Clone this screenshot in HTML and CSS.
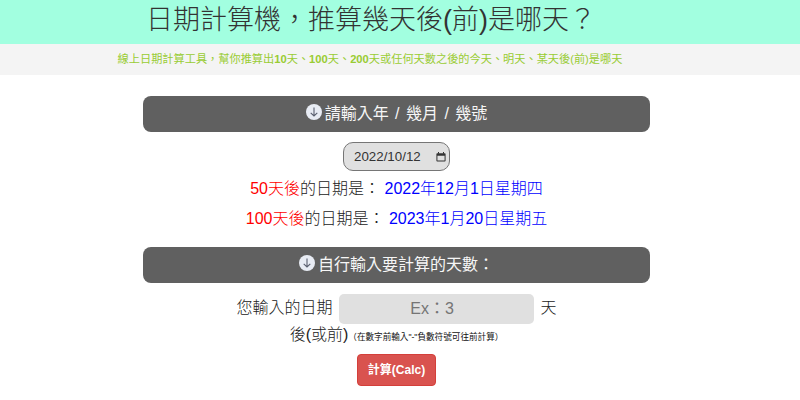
FILE: index.html
```html
<!DOCTYPE html>
<html lang="zh-Hant">
<head>
    <meta charset="UTF-8">
    <meta name="viewport" content="width=device-width, initial-scale=1.0">
    <title>日期計算機</title>
    <link rel="stylesheet" href="styles.css">
</head>
<body>

<header class="top-title">
    <h1>日期計算機，推算幾天後(前)是哪天？</h1>
</header>

<div class="sub-title">
    <h2>線上日期計算工具，幫你推算出<b>10</b>天、<b>100</b>天、<b>200</b>天或任何天數之後的今天、明天、某天後(前)是哪天</h2>
</div>

<div class="container">
    <div class="section-bar">
        <svg class="down-icon" viewBox="0 0 16 16"><circle cx="8" cy="8" r="8" fill="#e8ecf4"/><path d="M8 3.4v8.6M4.7 8.8 8 12l3.3-3.2" fill="none" stroke="#5a6070" stroke-width="1.1"/></svg>
        <span>請輸入年 / 幾月 / 幾號</span>
    </div>

    <div class="date-box">
        <input class="date-input" type="text" value="2022/10/12">
        <svg class="cal-icon" viewBox="0 0 12 12"><path d="M1.5 1.5h9a1 1 0 0 1 1 1v8a1 1 0 0 1-1 1h-9a1 1 0 0 1-1-1v-8a1 1 0 0 1 1-1zM1.7 4.6v5.7h8.6V4.6z" fill="#333" fill-rule="evenodd"/><path d="M3 0v2M9 0v2" stroke="#333" stroke-width="1.2"/></svg>
    </div>
    <p class="result"><span class="red">50天後</span>的日期是： <span class="blue">2022年12月1日星期四</span></p>
    <p class="result"><span class="red">100天後</span>的日期是： <span class="blue">2023年1月20日星期五</span></p>

    <div class="section-bar second">
        <svg class="down-icon" viewBox="0 0 16 16"><circle cx="8" cy="8" r="8" fill="#e8ecf4"/><path d="M8 3.4v8.6M4.7 8.8 8 12l3.3-3.2" fill="none" stroke="#5a6070" stroke-width="1.1"/></svg>
        <span>自行輸入要計算的天數：</span>
    </div>

    <p class="day-form">
        您輸入的日期
        <input class="day-input" type="text" placeholder="Ex：3">
        天後(或前)<small class="hint">（在數字前輸入"-"負數符號可往前計算）</small>
    </p>

    <button class="calc-btn">計算(Calc)</button>
</div>

</body>
</html>
```

FILE: styles.css
```css
body {
    margin: 0;
    padding: 0;
    background-color: #fff;
    color: #222;
    font-family: "Liberation Sans", "Noto Sans CJK TC", sans-serif;
    font-weight: 300;
    overflow: hidden;
}

.top-title {
    height: 44px;
    background-color: #a2ffe0;
    padding-left: 146px;
}

.top-title h1 {
    margin: 0;
    font-size: 27px;
    font-weight: 300;
    line-height: 40px;
    color: #333;
}

.sub-title {
    height: 31px;
    background-color: #f4f4f4;
    padding-right: 60px;
    text-align: center;
}

.sub-title h2 {
    margin: 0;
    font-size: 11.2px;
    font-weight: normal;
    line-height: 31px;
    color: #99cc33;
}

.container {
    width: 507px;
    margin-left: 143px;
    padding-top: 21px;
    text-align: center;
}

.section-bar {
    display: flex;
    align-items: center;
    justify-content: center;
    gap: 3px;
    box-sizing: border-box;
    height: 36px;
    padding-bottom: 4px;
    background-color: #606060;
    border-radius: 8px;
    color: #f6f6f6;
    font-size: 16px;
    font-weight: normal;
    word-spacing: 2px;
}

.section-bar.second {
    margin-top: 16px;
}

.down-icon {
    width: 16px;
    height: 16px;
}

.date-box {
    display: flex;
    align-items: center;
    box-sizing: border-box;
    width: 107px;
    height: 29px;
    margin: 10px auto 0;
    padding: 0 3px 0 10px;
    background-color: #e0e0e0;
    border: 1px solid #767676;
    border-radius: 10px;
}

.date-input {
    width: 82px;
    padding: 0;
    background: none;
    border: none;
    font-family: "Liberation Sans", sans-serif;
    font-size: 13.33px;
    color: #333;
}

.cal-icon {
    width: 12px;
    height: 12px;
}

.result {
    margin: 0;
    height: 30px;
    font-size: 16px;
    line-height: 36px;
}

.red {
    color: #f00;
}

.blue {
    color: #00f;
}

.day-form {
    width: 330px;
    margin: 11px auto 0;
    font-size: 16px;
    line-height: 22px;
}

.day-input {
    box-sizing: border-box;
    width: 195px;
    height: 30px;
    margin: 0 2px;
    padding: 0 10px 0 1px;
    background-color: #e0e0e0;
    border: none;
    border-radius: 5px;
    font-size: 16px;
    font-family: "Liberation Sans", "Noto Sans CJK TC", sans-serif;
    text-align: center;
    vertical-align: middle;
}

.hint {
    font-size: 8.6px;
    font-weight: normal;
    color: #111;
    text-spacing-trim: space-all;
}

.calc-btn {
    display: block;
    width: 79px;
    height: 32px;
    margin: 6px auto 0;
    padding: 0 0 3px;
    background-color: #d9534f;
    border: 1px solid #d43f3a;
    border-radius: 4px;
    color: #fff;
    font-size: 12px;
    font-weight: bold;
    font-family: "Liberation Sans", "Noto Sans CJK TC", sans-serif;
}
```
